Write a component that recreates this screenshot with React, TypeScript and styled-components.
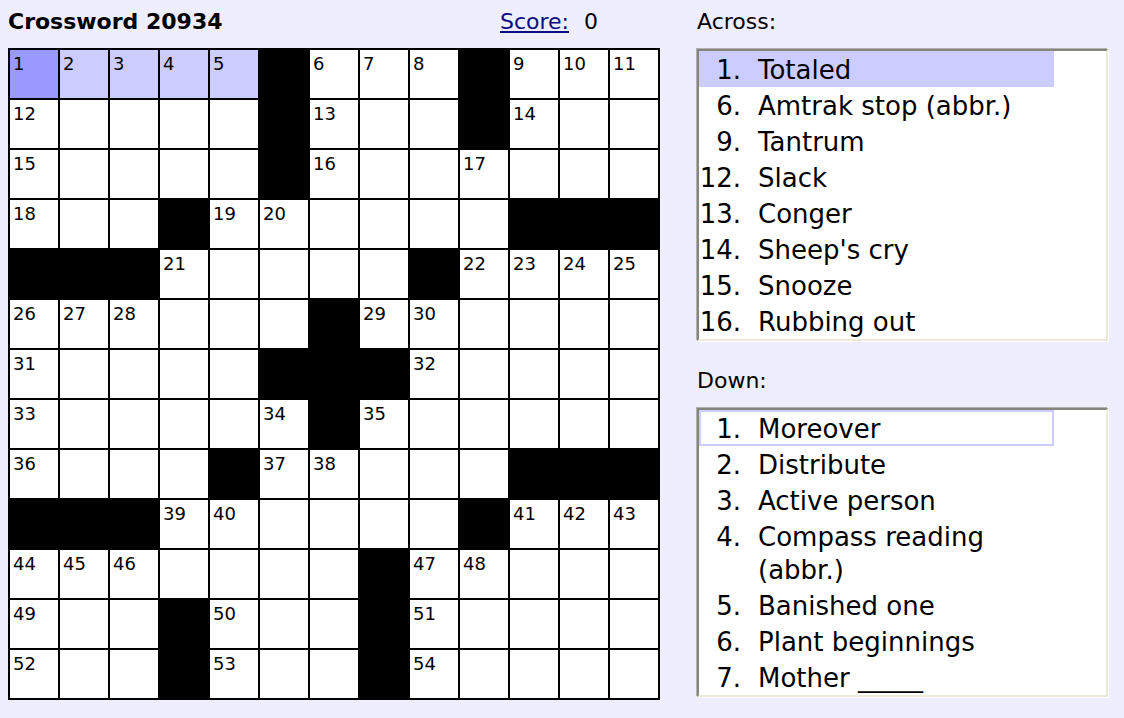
import React from "react";
import styled, { createGlobalStyle } from "styled-components";

const GlobalStyle = createGlobalStyle`
  html, body { margin: 0; padding: 0; background: #eeeeff; }
  body { font-family: "DejaVu Sans", Verdana, sans-serif; color: #000; }
`;

const PATTERN = [
  ".....#...#...",
  ".....#...#...",
  ".....#.......",
  "...#......###",
  "###.....#....",
  "......#......",
  ".....###.....",
  "......#......",
  "....#.....###",
  "###......#...",
  ".......#.....",
  "...#...#.....",
  "...#...#.....",
];

const ACROSS: [number, string][] = [
  [1, "Totaled"],
  [6, "Amtrak stop (abbr.)"],
  [9, "Tantrum"],
  [12, "Slack"],
  [13, "Conger"],
  [14, "Sheep's cry"],
  [15, "Snooze"],
  [16, "Rubbing out"],
];

const DOWN: [number, string][] = [
  [1, "Moreover"],
  [2, "Distribute"],
  [3, "Active person"],
  [4, "Compass reading (abbr.)"],
  [5, "Banished one"],
  [6, "Plant beginnings"],
  [7, "Mother _____"],
];

type Kind = "black" | "white" | "word" | "current";

const Page = styled.div`
  display: flex;
  align-items: flex-start;
  gap: 37px;
  padding: 8px;
`;

const LeftCol = styled.div`
  width: 652px;
  display: flex;
  flex-direction: column;
`;

const Header = styled.div`
  display: flex;
  align-items: baseline;
  height: 28px;
  line-height: 28px;
  margin-bottom: 12px;
`;

const Title = styled.div`
  font-size: 22px;
  font-weight: bold;
`;

const ScoreBox = styled.div`
  margin-left: auto;
  margin-right: 62px;
  font-size: 22px;
`;

const ScoreLink = styled.a`
  color: #0a0a80;
  text-decoration: underline;
  cursor: pointer;
`;

const ScoreValue = styled.span`
  margin-left: 15px;
`;

const Board = styled.div`
  display: grid;
  grid-template-columns: repeat(13, 48px);
  grid-auto-rows: 48px;
  gap: 2px;
  padding: 2px;
  background: #000;
  width: max-content;
`;

const Cell = styled.div<{ $kind: Kind }>`
  background: ${(p) =>
    p.$kind === "black"
      ? "#000"
      : p.$kind === "current"
      ? "#9999ff"
      : p.$kind === "word"
      ? "#ccccff"
      : "#fff"};
`;

const CellNum = styled.div`
  font-size: 18px;
  line-height: 18px;
  padding: 5px 0 0 3px;
`;

const RightCol = styled.div`
  width: 411px;
  display: flex;
  flex-direction: column;
`;

const Label = styled.div<{ $gap?: number }>`
  font-size: 22px;
  line-height: 28px;
  margin-top: ${(p) => p.$gap ?? 0}px;
  margin-bottom: 13px;
`;

const ClueBox = styled.div`
  background: #fff;
  border: 2px solid;
  border-color: #85847d #ece9d8 #ece9d8 #85847d;
  box-shadow: -1px -1px 0 #b2b1ab, 1px 1px 0 #fff;
  overflow: hidden;
`;

const ClueItem = styled.div<{ $selected?: boolean; $focused?: boolean }>`
  display: grid;
  grid-template-columns: 42px 1fr;
  column-gap: 17px;
  width: 355px;
  box-sizing: border-box;
  padding-top: 3px;
  font-size: 26px;
  line-height: 33px;
  background: ${(p) => (p.$selected ? "#ccccff" : "transparent")};
  outline: ${(p) => (p.$focused ? "2px solid #ccccff" : "none")};
  outline-offset: -2px;
`;

const ClueNum = styled.span`
  text-align: right;
  white-space: nowrap;
`;

const ClueText = styled.span``;

function numbering() {
  const nums: (number | null)[][] = [];
  let n = 1;
  const black = (r: number, c: number) =>
    r < 0 || c < 0 || r >= 13 || c >= 13 || PATTERN[r][c] === "#";
  for (let r = 0; r < 13; r++) {
    const row: (number | null)[] = [];
    for (let c = 0; c < 13; c++) {
      if (black(r, c)) {
        row.push(null);
        continue;
      }
      const across = black(r, c - 1) && !black(r, c + 1);
      const down = black(r - 1, c) && !black(r + 1, c);
      row.push(across || down ? n++ : null);
    }
    nums.push(row);
  }
  return nums;
}

export default function App() {
  const nums = numbering();
  return (
    <>
      <GlobalStyle />
      <Page>
        <LeftCol>
          <Header>
            <Title>Crossword 20934</Title>
            <ScoreBox>
              <ScoreLink>Score:</ScoreLink>
              <ScoreValue>0</ScoreValue>
            </ScoreBox>
          </Header>
          <Board>
            {PATTERN.map((row, r) =>
              row.split("").map((ch, c) => {
                let kind: Kind = ch === "#" ? "black" : "white";
                if (r === 0 && c === 0) kind = "current";
                else if (r === 0 && c <= 4) kind = "word";
                const num = nums[r][c];
                return (
                  <Cell key={`${r}-${c}`} $kind={kind}>
                    {num !== null && <CellNum>{num}</CellNum>}
                  </Cell>
                );
              })
            )}
          </Board>
        </LeftCol>
        <RightCol>
          <Label>Across:</Label>
          <ClueBox>
            {ACROSS.map(([n, t], i) => (
              <ClueItem key={n} $selected={i === 0}>
                <ClueNum>{n}.</ClueNum>
                <ClueText>{t}</ClueText>
              </ClueItem>
            ))}
          </ClueBox>
          <Label $gap={26}>Down:</Label>
          <ClueBox>
            {DOWN.map(([n, t], i) => (
              <ClueItem key={n} $focused={i === 0}>
                <ClueNum>{n}.</ClueNum>
                <ClueText>{t}</ClueText>
              </ClueItem>
            ))}
          </ClueBox>
        </RightCol>
      </Page>
    </>
  );
}
